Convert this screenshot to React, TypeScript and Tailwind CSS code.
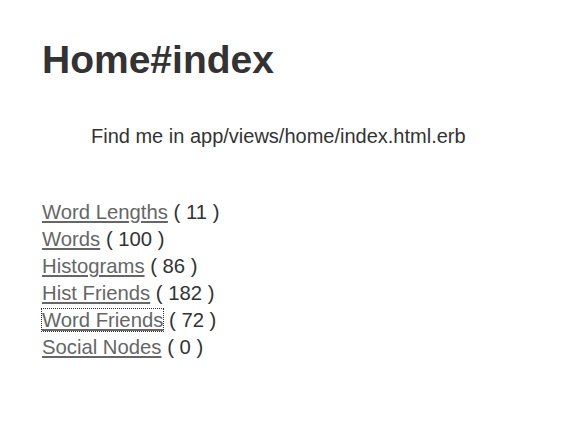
export default function App() {
  const items: [string, number][] = [
    ["Word Lengths", 11],
    ["Words", 100],
    ["Histograms", 86],
    ["Hist Friends", 182],
    ["Word Friends", 72],
    ["Social Nodes", 0],
  ];
  return (
    <div className="min-h-[441px] bg-white pl-[42px] pt-[37px] text-[#333] font-['Liberation_Sans',Arial,sans-serif]">
      <h1 className="text-[39px] font-bold leading-[45px]">Home#index</h1>
      <p className="mt-[43px] pl-[49px] text-[20px] leading-[23px]">Find me in app/views/home/index.html.erb</p>
      <div className="mt-[51px] text-[20.3px] leading-[27px]">
        {items.map(([name, n], i) => (
          <div key={name}>
            <a
              href="#"
              className={
                "text-[#666] underline " +
                (i === 4 ? "outline outline-1 outline-dotted outline-[#333]" : "")
              }
            >
              {name}
            </a>{" "}
            ( {n} )
          </div>
        ))}
      </div>
    </div>
  );
}
